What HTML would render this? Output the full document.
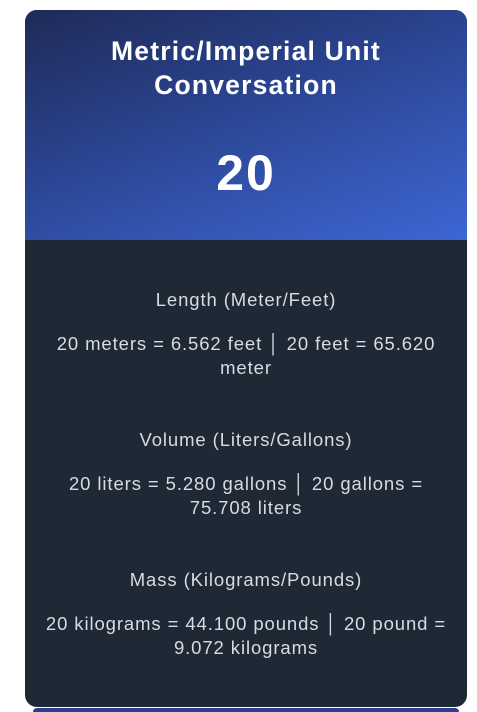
<!DOCTYPE html>
<html><head><style>
body{margin:0;background:#fff;width:477px;height:710px;overflow:hidden;font-family:"Liberation Sans",sans-serif;position:relative}
.card{position:absolute;left:25px;top:10px;width:442px;height:697px;border-radius:12px;overflow:hidden;background:#1f2835}
.hd{height:230px;background:linear-gradient(160deg,#1f2a57 0%,#2b4592 45%,#3d66d4 100%);color:#fff;text-align:center}
.t{position:absolute;top:24px;left:0;right:0;font-size:26.5px;letter-spacing:1.2px;font-weight:bold;line-height:34px}
.n{position:absolute;top:138px;left:0;right:0;font-size:50px;letter-spacing:2px;font-weight:bold;line-height:50px}
.s{position:absolute;left:14px;right:14px;text-align:center;color:#d8dbe0;font-size:18.5px;letter-spacing:0.9px;line-height:24px}
.strip{position:absolute;left:33px;top:708px;width:426px;height:4px;background:#2b3f8a;border-radius:4px 4px 0 0}
</style></head><body>
<div class="card">
<div class="hd"><div class="t">Metric/Imperial Unit<br>Conversation</div><div class="n">20</div></div>
<div class="s" style="top:278px">Length (Meter/Feet)</div>
<div class="s" style="top:322px">20 meters = 6.562 feet │ 20 feet = 65.620 meter</div>
<div class="s" style="top:418px">Volume (Liters/Gallons)</div>
<div class="s" style="top:462px">20 liters = 5.280 gallons │ 20 gallons = 75.708 liters</div>
<div class="s" style="top:558px">Mass (Kilograms/Pounds)</div>
<div class="s" style="top:602px;left:8px;right:8px">20 kilograms = 44.100 pounds │ 20 pound = 9.072 kilograms</div>
</div>
<div class="strip"></div>
</body></html>
